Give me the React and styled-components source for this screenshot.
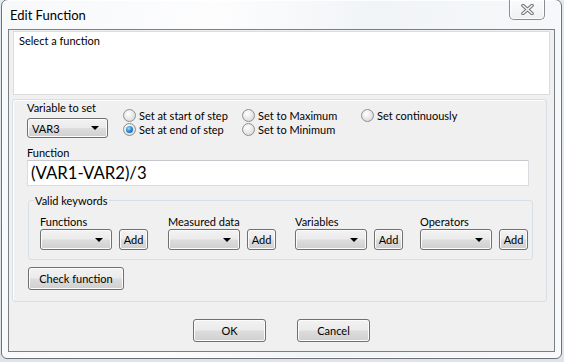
import React from "react";
import styled, { createGlobalStyle, css } from "styled-components";

const GlobalStyle = createGlobalStyle`
  html, body {
    margin: 0;
    padding: 0;
  }
  body {
    width: 564px;
    height: 362px;
    overflow: hidden;
    background: linear-gradient(to bottom, #e4e9ef, #dfe4ea);
    font-family: Lato, "Noto Sans", sans-serif;
    font-size: 11px;
    color: #000;
  }
`;

const winButton = css`
  box-sizing: border-box;
  border: 1px solid #707070;
  border-radius: 3px;
  background: linear-gradient(to bottom, #f2f2f2 0%, #ebebeb 48%, #dddddd 52%, #cfcfcf 100%);
  box-shadow: inset 0 0 0 1px #fcfcfc;
  font-family: inherit;
  font-size: 11px;
  color: #000;
  padding: 0;
`;

const Page = styled.div`
  padding-left: 1px;
  height: 362px;
  box-sizing: border-box;
`;

const Window = styled.div`
  box-sizing: border-box;
  width: 561px;
  height: 360px;
  margin-top: -1px;
  border: 1px solid #6d7177;
  border-radius: 7px 7px 6px 6px;
  background: linear-gradient(100deg, #f6f8fa 0%, #fdfdfe 35%, #f1f4f7 60%, #f8f9fb 100%);
  box-shadow: inset 0 0 0 1px rgba(255, 255, 255, 0.8);
  padding: 0 6px 6px 6px;
  display: flex;
  flex-direction: column;
`;

const TitleBar = styled.div`
  height: 29px;
  display: flex;
  align-items: flex-start;
`;

const Title = styled.div`
  font-size: 13px;
  padding: 7px 0 0 2px;
  color: #000;
`;

const CloseButton = styled.div`
  box-sizing: border-box;
  margin-left: auto;
  margin-right: 10px;
  width: 36px;
  height: 20px;
  border: 1px solid #8a8e94;
  border-top: none;
  border-radius: 0 0 5px 5px;
  background: linear-gradient(to bottom, #fafbfc, #eef1f4);
  box-shadow: inset 0 0 0 1px rgba(255, 255, 255, 0.9);
  display: flex;
  align-items: center;
  justify-content: center;
`;

const Client = styled.div`
  flex: 1;
  border: 1px solid #7b7f85;
  background: #f0f0f0;
  display: flex;
  flex-direction: column;
`;

const DescBox = styled.div`
  box-sizing: border-box;
  height: 64px;
  margin: 1px 4px 0 4px;
  border: 1px solid #dcdcdc;
  background: #fff;
  padding: 2px 5px;
`;

const Panel = styled.div`
  box-sizing: border-box;
  height: 203px;
  margin: 4px 7px 0 3px;
  border: 1px solid #d5dfe5;
  border-radius: 3px;
  box-shadow: inset 1px 1px 0 #fff;
  padding: 1px 13px 0 14px;
  display: flex;
  flex-direction: column;
`;

const TopRow = styled.div`
  display: flex;
  align-items: flex-start;
`;

const VarColumn = styled.div`
  display: flex;
  flex-direction: column;
  width: 96px;
`;

const Label = styled.div`
  line-height: 15px;
  height: 15px;
  white-space: nowrap;
`;

const TopLabel = styled(Label)`
  line-height: 13px;
  height: 13px;
  margin-top: ${(p) => p.$mt || 0}px;
`;

const Combo = styled.div`
  ${winButton};
  width: ${(p) => p.$w}px;
  height: ${(p) => p.$h || 21}px;
  margin-top: ${(p) => p.$mt || 0}px;
  display: flex;
  align-items: center;
  padding: 0 8px 0 4px;
`;

const ComboText = styled.span`
  flex: 1;
`;

const Arrow = styled.span`
  width: 0;
  height: 0;
  border-left: 4px solid transparent;
  border-right: 4px solid transparent;
  border-top: 4px solid #000;
`;

const RadioGrid = styled.div`
  display: grid;
  grid-template-columns: 119px 119px auto;
  grid-auto-rows: 14px;
  margin-top: 7px;
`;

const RadioItem = styled.label`
  display: flex;
  align-items: center;
  gap: 3px;
  white-space: nowrap;
`;

const RadioCircle = styled.span`
  box-sizing: border-box;
  width: 13px;
  height: 13px;
  border-radius: 50%;
  border: 1px solid #8e8f8f;
  background: radial-gradient(circle at 40% 35%, #ffffff 0%, #e8e8e8 50%, #cfcfcf 100%);
  display: flex;
  align-items: center;
  justify-content: center;
  &::after {
    content: "";
    display: ${(p) => (p.$checked ? "block" : "none")};
    width: 7px;
    height: 7px;
    border-radius: 50%;
    background: radial-gradient(circle at 40% 35%, #a9e1ff 0%, #2a8ed3 45%, #0f4f86 100%);
  }
`;

const FunctionInput = styled.div`
  box-sizing: border-box;
  width: 502px;
  height: 26px;
  margin-top: 1px;
  background: #fff;
  border: 1px solid #d9dce0;
  border-top-color: #c6c9ce;
  font-size: 16.7px;
  line-height: 24px;
  padding-left: 3px;
`;

const Keywords = styled.fieldset`
  box-sizing: border-box;
  width: 505px;
  height: 66px;
  margin: 8px 0 0 1px;
  padding: 0;
  border: 1px solid #d5dfe5;
  border-radius: 3px;
  min-inline-size: 0;
`;

const Legend = styled.legend`
  margin-left: 5px;
  padding: 0 2px 0 1px;
  line-height: 13px;
`;

const KeywordGrid = styled.div`
  display: grid;
  grid-template-columns: 128px 127px 125px auto;
  padding: 7px 0 0 11px;
`;

const KeywordCol = styled.div`
  display: flex;
  flex-direction: column;
`;

const KeywordRow = styled.div`
  display: flex;
  align-items: center;
  gap: 7px;
`;

const AddButton = styled.button`
  ${winButton};
  width: 29px;
  height: 21px;
`;

const CheckButton = styled.button`
  ${winButton};
  width: 96px;
  height: 23px;
  margin: 7px 0 0 1px;
`;

const Footer = styled.div`
  display: flex;
  justify-content: center;
  gap: 31px;
  margin-top: 17px;
`;

const DialogButton = styled.button`
  ${winButton};
  width: 73px;
  height: 23px;
`;

const CloseGlyph = () => (
  <svg width="13" height="11" viewBox="0 0 13 11">
    <path d="M2 1.5 L11 9.5 M11 1.5 L2 9.5" stroke="#6f7378" strokeWidth="3.6" strokeLinecap="round" />
    <path d="M2 1.5 L11 9.5 M11 1.5 L2 9.5" stroke="#f4f6f8" strokeWidth="1.6" strokeLinecap="round" />
  </svg>
);

const Radio = ({ checked, children }) => (
  <RadioItem>
    <RadioCircle $checked={checked} />
    <span>{children}</span>
  </RadioItem>
);

const keywordGroups = ["Functions", "Measured data", "Variables", "Operators"];

export default function App() {
  return (
    <Page>
      <GlobalStyle />
      <Window>
        <TitleBar>
          <Title>Edit Function</Title>
          <CloseButton>
            <CloseGlyph />
          </CloseButton>
        </TitleBar>
        <Client>
          <DescBox>Select a function</DescBox>
          <Panel>
            <TopRow>
              <VarColumn>
                <TopLabel>Variable to set</TopLabel>
                <Combo $w={81} $h={20} $mt={4}>
                  <ComboText>VAR3</ComboText>
                  <Arrow />
                </Combo>
              </VarColumn>
              <RadioGrid>
                <Radio>Set at start of step</Radio>
                <Radio>Set to Maximum</Radio>
                <Radio>Set continuously</Radio>
                <Radio checked>Set at end of step</Radio>
                <Radio>Set to Minimum</Radio>
              </RadioGrid>
            </TopRow>
            <TopLabel $mt={8}>Function</TopLabel>
            <FunctionInput>(VAR1-VAR2)/3</FunctionInput>
            <Keywords>
              <Legend>Valid keywords</Legend>
              <KeywordGrid>
                {keywordGroups.map((name) => (
                  <KeywordCol key={name}>
                    <Label>{name}</Label>
                    <KeywordRow>
                      <Combo $w={72}>
                        <ComboText />
                        <Arrow />
                      </Combo>
                      <AddButton>Add</AddButton>
                    </KeywordRow>
                  </KeywordCol>
                ))}
              </KeywordGrid>
            </Keywords>
            <CheckButton>Check function</CheckButton>
          </Panel>
          <Footer>
            <DialogButton>OK</DialogButton>
            <DialogButton>Cancel</DialogButton>
          </Footer>
        </Client>
      </Window>
    </Page>
  );
}
